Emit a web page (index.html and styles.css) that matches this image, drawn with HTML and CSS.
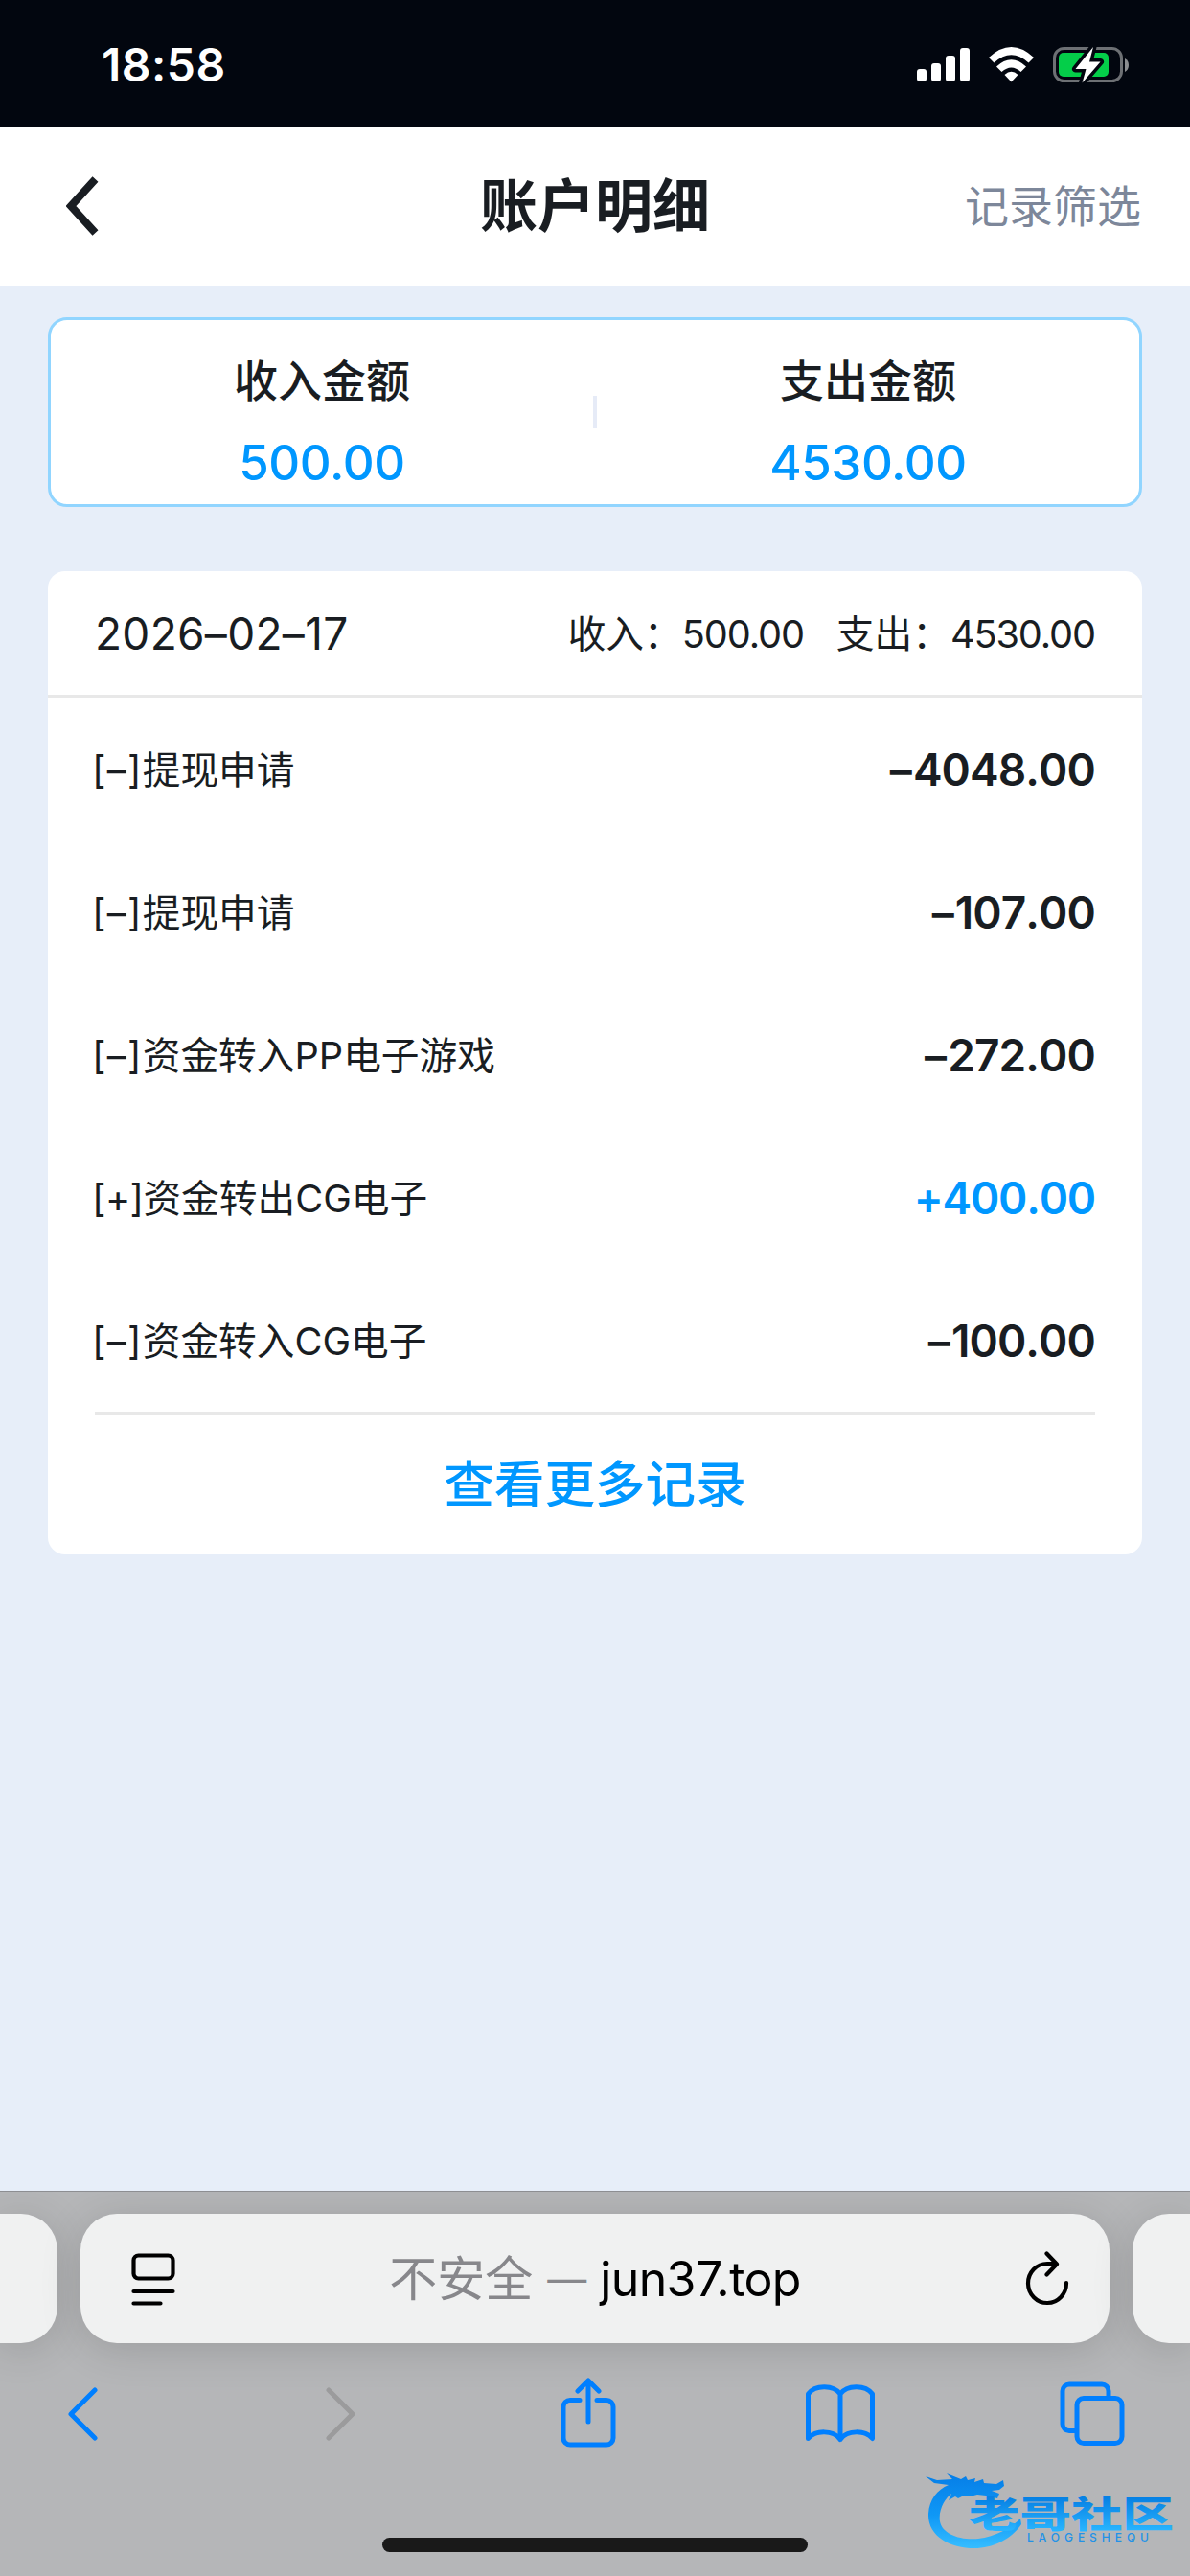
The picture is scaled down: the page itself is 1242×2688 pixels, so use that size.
FILE: index.html
```html
<!DOCTYPE html>
<html lang="zh-CN">
<head>
<meta charset="utf-8">
<title>账户明细</title>
<link rel="stylesheet" href="styles.css">
</head>
<body>
<div class="screen">
  <header class="status">
    <span class="clock">18:58</span>
    <svg class="status-icons" width="222" height="41" viewBox="0 0 222 41">
      <g fill="#fff">
        <rect x="1" y="25" width="10" height="13" rx="3"/>
        <rect x="16" y="19" width="10" height="19" rx="3"/>
        <rect x="31" y="11" width="10" height="27" rx="3"/>
        <rect x="46" y="3" width="10" height="35" rx="3"/>
        <path d="M76 13Q99.500-9 123 13L117.500 18.500Q99.500 2 81.500 18.500Z"/>
        <path d="M84 22.500Q99.500 8 115 22.500L109.500 28Q99.500 19 89.500 28Z"/>
        <path d="M92.500 31Q99.500 24.500 106.500 31L99.500 38.500Z"/>
      </g>
      <rect x="144.500" y="3.500" width="70" height="34" rx="10" fill="none" stroke="#6d7074" stroke-width="3"/>
      <path d="M218 14q4 2 4 7t-4 7z" fill="#8b8d90"/>
      <rect x="149" y="8" width="52" height="25" rx="5" fill="#04ce49"/>
      <path d="M185 2L166.500 25h11l-4 14.500L192.500 17.500h-11.500z" fill="#fff" stroke="#02060f" stroke-width="7" paint-order="stroke" stroke-linejoin="round"/>
    </svg>
  </header>
  <nav class="nav">
    <svg class="nav-back" width="34" height="62" viewBox="0 0 34 62"><path d="M30.500 3L5 31l25.500 28" fill="none" stroke="#191d22" stroke-width="8"/></svg>
    <h1 class="nav-title">账户明细</h1>
    <span class="nav-action">记录筛选</span>
  </nav>
  <main class="content">
    <section class="summary">
      <div class="total"><span class="total-label">收入金额</span><span class="total-value">500.00</span></div>
      <i class="divider"></i>
      <div class="total"><span class="total-label">支出金额</span><span class="total-value">4530.00</span></div>
    </section>
    <section class="records">
      <div class="day">
        <span class="date">2026–02–17</span>
        <span class="day-total">收入：<b>500.00</b></span>
        <span class="day-total">支出：<b>4530.00</b></span>
      </div>
      <ul class="list">
        <li class="row"><span class="name"><i class="minus">[–]</i>提现申请</span><span class="amount"><i>–</i>4048.00</span></li>
        <li class="row"><span class="name"><i class="minus">[–]</i>提现申请</span><span class="amount"><i>–</i>107.00</span></li>
        <li class="row"><span class="name"><i class="minus">[–]</i>资金转入PP电子游戏</span><span class="amount"><i>–</i>272.00</span></li>
        <li class="row"><span class="name"><i class="plus">[+]</i>资金转出CG电子</span><span class="amount income">+400.00</span></li>
        <li class="row"><span class="name"><i class="minus">[–]</i>资金转入CG电子</span><span class="amount"><i>–</i>100.00</span></li>
      </ul>
      <a class="more">查看更多记录</a>
    </section>
  </main>
  <footer class="browser">
    <div class="tabs">
      <div class="tab tab-prev"></div>
      <div class="tab address">
        <svg width="46" height="58" viewBox="0 0 46 58" fill="none" stroke="#000" stroke-width="4.200" stroke-linecap="round"><rect x="2.500" y="4.500" width="41" height="24" rx="5"/><path d="M2.500 42h41M2.500 54.500h28"/></svg>
        <p class="url"><span class="insecure">不安全</span><i class="dash">—</i><span class="host">jun37.top</span></p>
        <svg width="46" height="58" viewBox="0 0 46 58" fill="none" stroke="#000" stroke-width="4.200" stroke-linecap="round" stroke-linejoin="round"><path d="M43 33a20 20.500 0 1 1-20-20h9M22.500 2.500L33 13.500 22.500 24.500"/></svg>
      </div>
      <div class="tab tab-next"></div>
    </div>
    <div class="tools">
      <span class="tool back"><svg width="34" height="56" viewBox="0 0 34 56"><path d="M30 3L5 28l25 25"/></svg></span>
      <span class="tool forward"><svg width="34" height="56" viewBox="0 0 34 56"><path d="M4 3l25 25L4 53"/></svg></span>
      <span class="tool"><svg width="58" height="78" viewBox="0 0 58 78"><path d="M20 24.500H10a7 7 0 0 0-7 7V64a7 7 0 0 0 7 7h38a7 7 0 0 0 7-7V31.500a7 7 0 0 0-7-7H38M29 47V5M18 15L29 4 40 15"/></svg></span>
      <span class="tool"><svg width="72" height="64" viewBox="0 0 72 64"><path d="M36 58.500V11C29 1.500 10 1 2.500 11v46.500C10 48.500 29 48.500 36 58.500 43 48.500 62 48.500 69.500 57.500V11C62 1 43 1.500 36 11"/></svg></span>
      <span class="tool"><svg width="68" height="68" viewBox="0 0 68 68"><rect x="18" y="17.500" width="47" height="47" rx="7"/><path d="M17 51.500H10a7 7 0 0 1-7-7V10a7 7 0 0 1 7-7h34a7 7 0 0 1 7 7v7"/></svg></span>
    </div>
    <div class="home"></div>
    <svg class="brand" width="264" height="90" viewBox="0 0 264 90">
      <defs><linearGradient id="wave" gradientUnits="userSpaceOnUse" x1="0" y1="8" x2="0" y2="84"><stop offset="0" stop-color="#067fe8"/><stop offset=".55" stop-color="#0f98f6"/><stop offset="1" stop-color="#36bdff"/></linearGradient>
      <linearGradient id="ink" gradientUnits="userSpaceOnUse" x1="0" y1="32" x2="0" y2="66"><stop offset="0" stop-color="#0781e4"/><stop offset="1" stop-color="#28b5ff"/></linearGradient></defs>
      <path fill="url(#wave)" d="M3 9l12 4 16-1-6-6 15 6 5-3 2 4 8-2-1 4 9-3 1 4 13 1 7-4 1 6-5 4-8 1 8 3-2 5-12-3-9-1-8 2-6-1-6 3-3-2-7 4 3-7C24 31 16 44 18 56c2 13 21 20 40 18 18-2 34-11 44-21l1 6C92 75 73 84 54 84 28 84 5 71 6 48 7 33 15 23 27 18L12 16z"/>
      <text class="brand-name" x="48" y="62" textLength="214" lengthAdjust="spacingAndGlyphs" fill="url(#ink)">老哥社区</text>
      <text class="brand-sub" x="109" y="77" textLength="127" fill="#2292e8">LAOGESHEQU</text>
    </svg>
  </footer>
</div>
</body>
</html>
```
FILE: styles.css
```css
* { box-sizing: border-box; margin: 0; padding: 0; }
body { font-family: Inter, "Noto Sans CJK SC", sans-serif; color: #191d22; background: #e7eef9; }
svg { display: block; flex: none; }
i, b { font-style: normal; font-weight: inherit; }
.screen { width: 1242px; height: 2688px; display: flex; flex-direction: column; overflow: hidden; }

.status { height: 132px; flex: none; background: #02060f; display: flex; justify-content: space-between; padding: 0 64px 0 106px; }
.clock { color: #fff; font-size: 48px; font-weight: 600; line-height: 136px; letter-spacing: .5px; }
.status-icons { margin-top: 47px; }

.nav { height: 166px; flex: none; background: #fff; display: grid; grid-template-columns: 1fr auto 1fr; align-items: center; padding: 0 51px; }
.nav-title { font-size: 60px; font-weight: 700; line-height: 80px; }
.nav-back { justify-self: start; margin-left: 18px; }
.nav-action { justify-self: end; font-size: 46px; color: #7d879a; line-height: 60px; }

.content { flex: 1; padding: 33px 50px 0; }
.summary { height: 198px; background: #fff; border: 3px solid #91d5ff; border-radius: 20px; display: flex; align-items: center; }
.total { flex: 1; display: flex; flex-direction: column; align-items: center; }
.total-label { font-size: 46px; font-weight: 500; line-height: 70px; margin-top: 19px; }
.total-value { font-size: 51px; font-weight: 500; line-height: 70px; margin-top: 16px; letter-spacing: -.400px; color: #0097ff; }
.divider { width: 4px; height: 34px; background: #e6ebf7; }

.records { margin-top: 67px; height: 1026px; background: #fff; border-radius: 18px; }
.day { height: 132px; border-bottom: 3px solid #e8e8e8; padding: 0 49px; display: flex; align-items: center; gap: 34px; }
.date { font-size: 46px; margin-right: auto; font-kerning: none; letter-spacing: .300px; }
.day-total { font-size: 39.700px; padding-bottom: 5px; }
.day-total b { letter-spacing: -1.100px; }
.list { list-style: none; margin: 0 49px; border-bottom: 3px solid #e8e8e8; }
.row { height: 149px; display: flex; align-items: center; justify-content: space-between; }
.name { font-size: 39.700px; padding-bottom: 4px; margin-left: -3px; }
.minus { letter-spacing: 1.300px; }
.plus { letter-spacing: -.600px; }
.amount { font-size: 46px; font-weight: 600; letter-spacing: -.900px; font-kerning: none; }
.amount i { margin-right: 2px; }
.income { color: #0097ff; letter-spacing: -1.200px; }
.more { display: block; text-align: center; font-size: 52.600px; font-weight: 500; line-height: 147px; color: #0097ff; }

.browser { position: relative; height: 402px; flex: none; background: #b5b6b8; border-top: 1px solid #8d8e92; overflow: hidden; }
.tabs { display: flex; gap: 24px; padding-top: 23px; }
.tab { height: 135px; background: #f0f1f1; border-radius: 38px; box-shadow: 0 6px 44px rgba(0, 0, 0, .14); flex: none; }
.tab-prev { width: 60px; border-radius: 0 38px 38px 0; }
.tab-next { width: 60px; border-radius: 38px 0 0 38px; }
.address { width: 1074px; display: flex; align-items: center; justify-content: space-between; padding: 0 42px 0 53px; }
.url { font-size: 50px; line-height: 70px; color: #000; white-space: nowrap; display: flex; margin-right: 11px; }
.insecure, .dash { color: #87878b; }
.dash { font-size: 41px; margin: 0 14px 0 15px; }
.host { letter-spacing: -.600px; }
.tools { display: flex; width: 1315px; height: 76px; margin: 36px 0 0 -44px; fill: none; stroke: #007fff; stroke-width: 5; stroke-linecap: round; stroke-linejoin: round; }
.tool { width: 263px; display: flex; align-items: center; justify-content: center; }
.back { padding-right: 4px; }
.forward { stroke: #9b9b9c; padding-left: 11px; }
.home { width: 444px; height: 15px; border-radius: 8px; background: #191919; margin: 91px auto 0; }
.brand { position: absolute; left: 963px; top: 288px; }
.brand-name { font: 900 38px "Noto Sans CJK SC", sans-serif; }
.brand-sub { font: 500 12px Inter, sans-serif; }
```
